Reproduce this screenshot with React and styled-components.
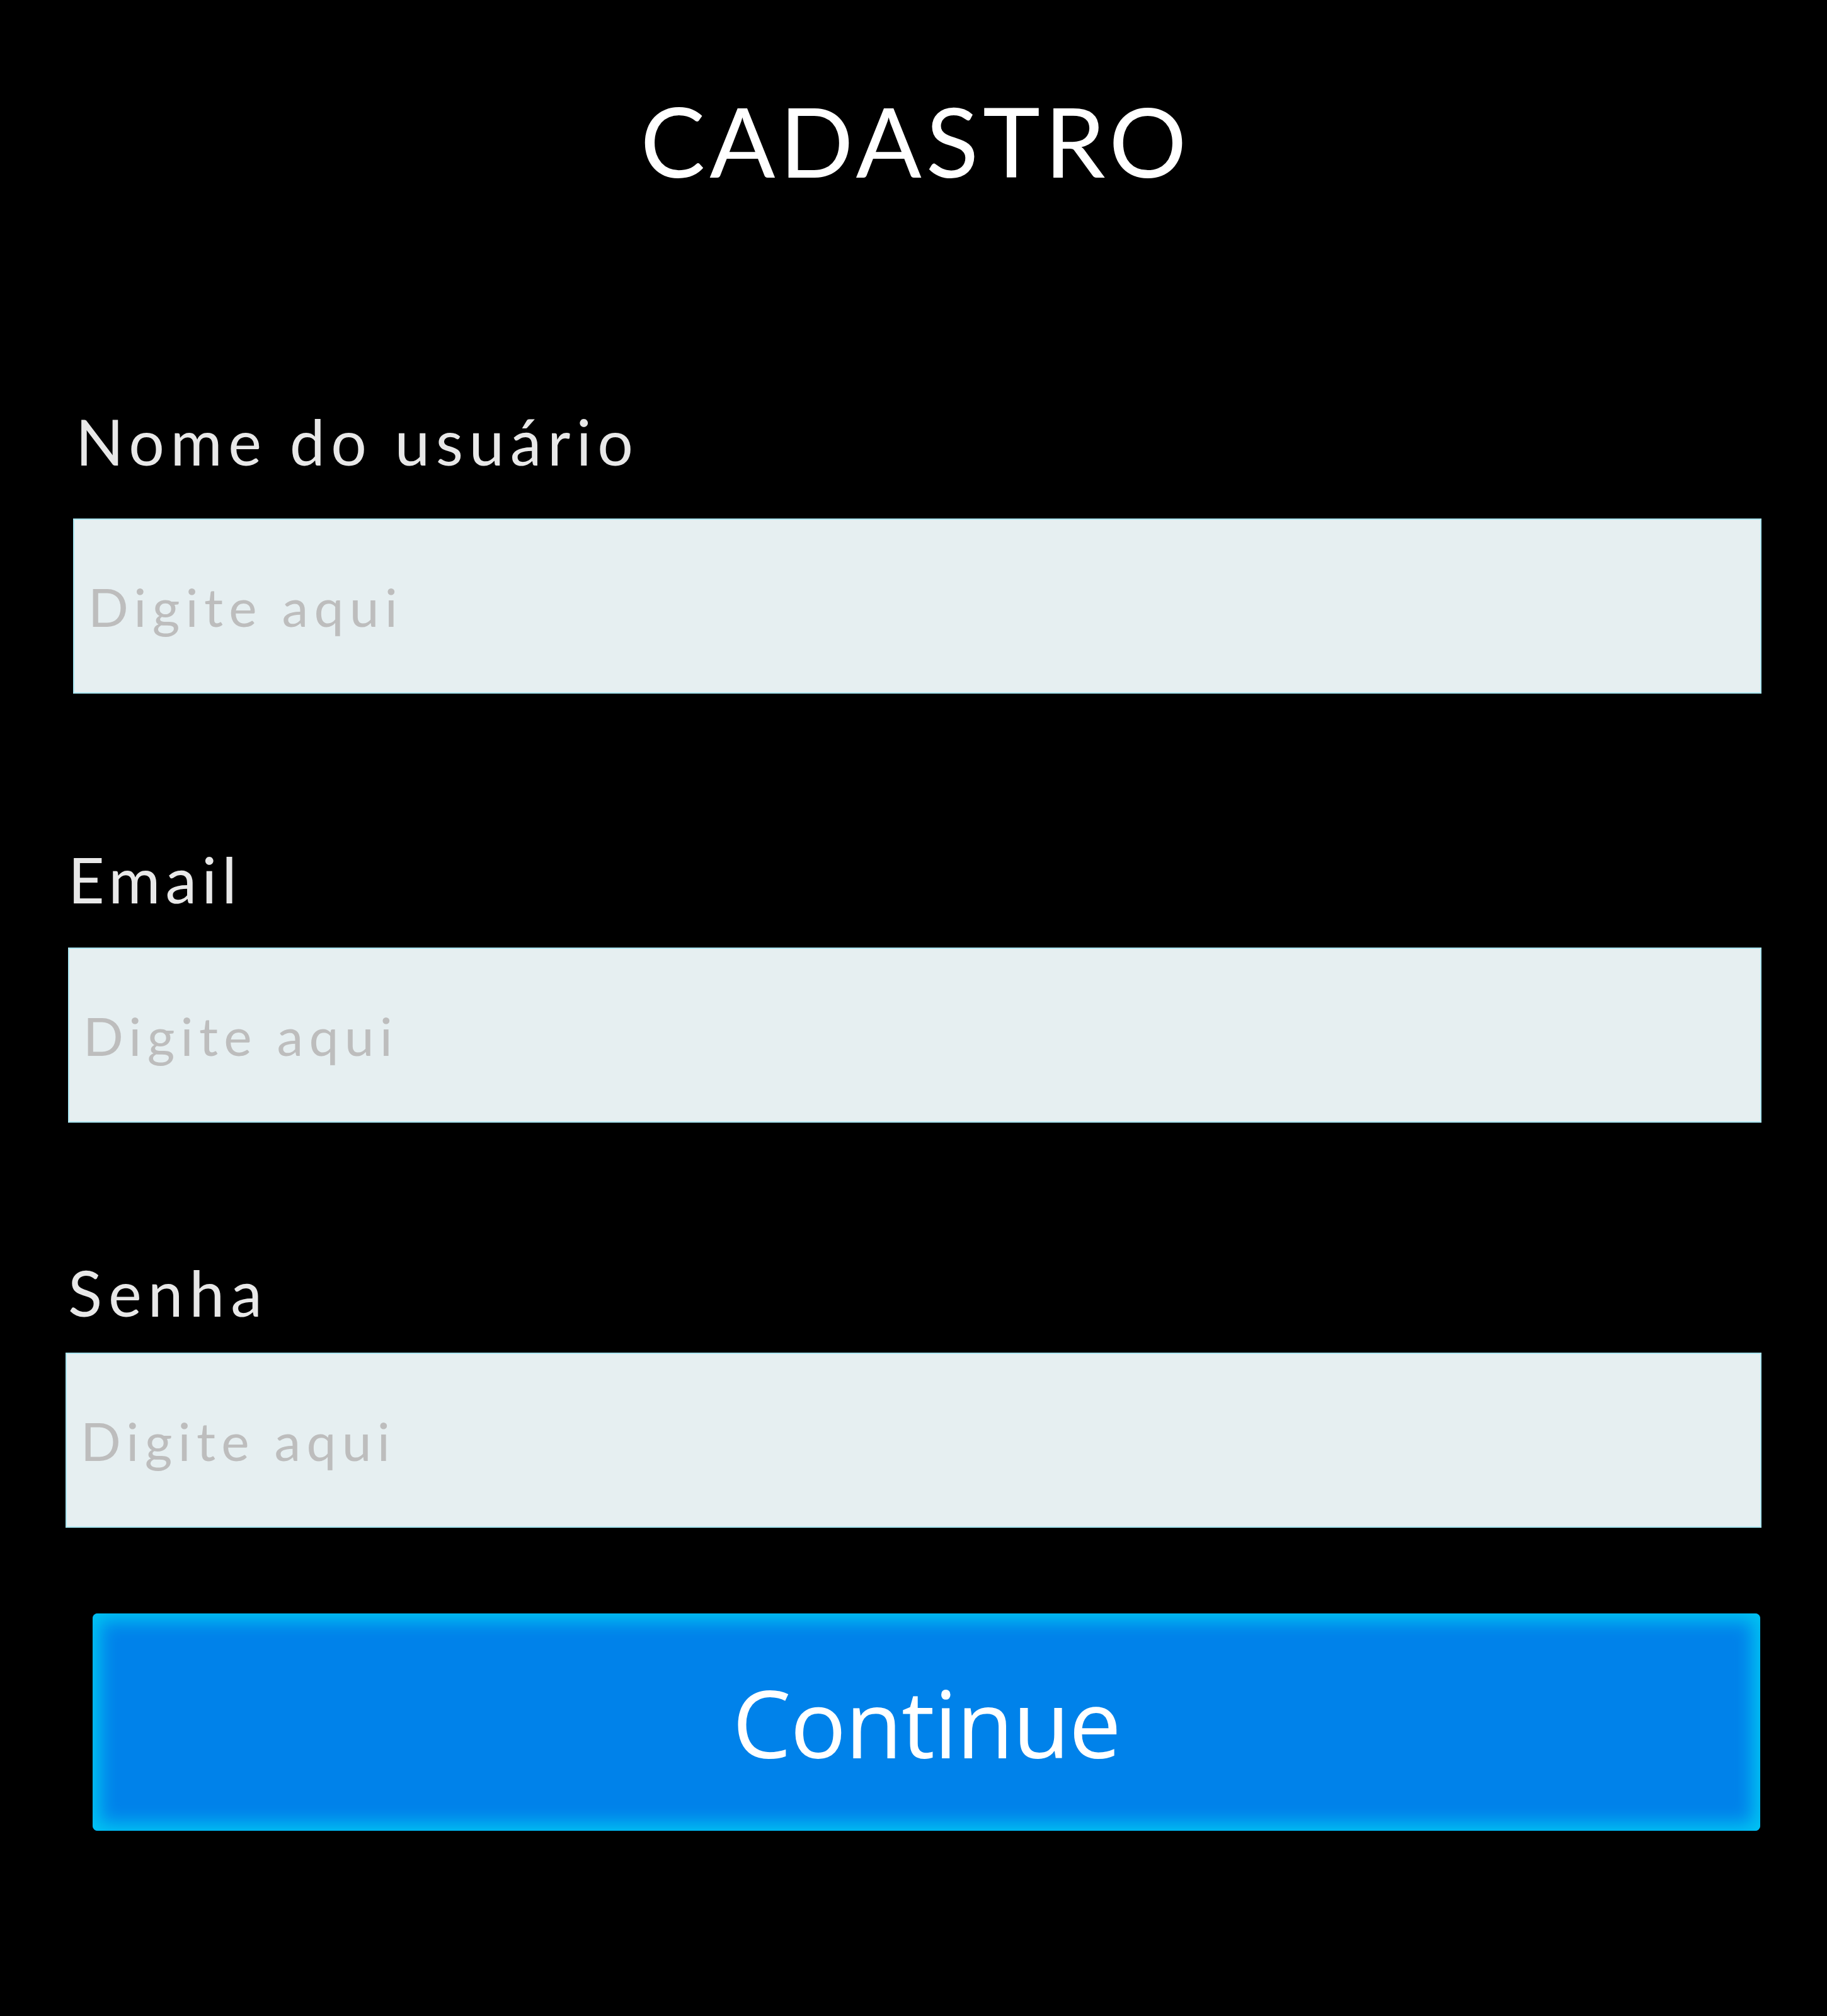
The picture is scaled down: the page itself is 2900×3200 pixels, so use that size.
import React from 'react'
import styled, { createGlobalStyle } from 'styled-components'

const GlobalStyle = createGlobalStyle`
  html, body {
    margin: 0;
    padding: 0;
    background: #000;
  }
  * {
    box-sizing: border-box;
  }
`

const Page = styled.div`
  width: 2900px;
  min-height: 3200px;
  background: #000;
  padding-top: 146px;
  display: flex;
  flex-direction: column;
  align-items: center;
  font-family: Lato, "Liberation Sans", sans-serif;
`

const Title = styled.h1`
  margin: 0;
  font-size: 154px;
  line-height: 1;
  font-weight: 400;
  color: #fff;
  letter-spacing: 0.045em;
  padding-left: 0.045em;
`

const Form = styled.form`
  width: 2692px;
  align-self: flex-start;
  margin: 350px 0 0 104px;
  display: flex;
  flex-direction: column;
`

const Field = styled.div`
  display: flex;
  flex-direction: column;
  margin-top: ${p => p.$space || 0}px;
  margin-left: ${p => p.$shift || 0}px;
`

const Label = styled.label`
  font-size: 100px;
  line-height: 1;
  color: #e8e8e8;
  letter-spacing: ${p => p.$spacing || 0.1}em;
  padding-left: ${p => p.$indent || 0}px;
  margin-bottom: ${p => p.$gap}px;
`

const Input = styled.input`
  width: 100%;
  height: 278px;
  background: #e6eff1;
  border: 2px solid #a9e5f0;
  padding: 0 22px;
  font-family: Lato, "Liberation Sans", sans-serif;
  font-size: 84px;
  letter-spacing: 0.11em;
  color: #555;
  outline: none;

  &::placeholder {
    color: #bdbdbd;
  }
`

const Button = styled.button`
  margin: 136px 2px 0 43px;
  height: 345px;
  border: none;
  border-radius: 8px;
  background: #0082ea;
  box-shadow: inset 0 0 28px 12px #00c4f2;
  color: #fff;
  font-family: "Open Sans", "Noto Sans", sans-serif;
  font-size: 148px;
  font-weight: 400;
  letter-spacing: -0.01em;
  cursor: pointer;
`

const fields = [
  { label: 'Nome do usuário', type: 'text', space: 0, gap: 73, indent: 4, shift: 12, spacing: 0.095 },
  { label: 'Email', type: 'email', space: 244, gap: 59, indent: 0, shift: 4, spacing: 0.08 },
  { label: 'Senha', type: 'password', space: 219, gap: 46, indent: 4, shift: 0, spacing: 0.1 },
]

export default function App() {
  return (
    <>
      <GlobalStyle />
      <Page>
        <Title>CADASTRO</Title>
        <Form onSubmit={e => e.preventDefault()}>
          {fields.map(f => (
            <Field key={f.label} $space={f.space} $shift={f.shift}>
              <Label $gap={f.gap} $indent={f.indent} $spacing={f.spacing}>{f.label}</Label>
              <Input type={f.type} placeholder="Digite aqui" />
            </Field>
          ))}
          <Button type="submit">Continue</Button>
        </Form>
      </Page>
    </>
  )
}
